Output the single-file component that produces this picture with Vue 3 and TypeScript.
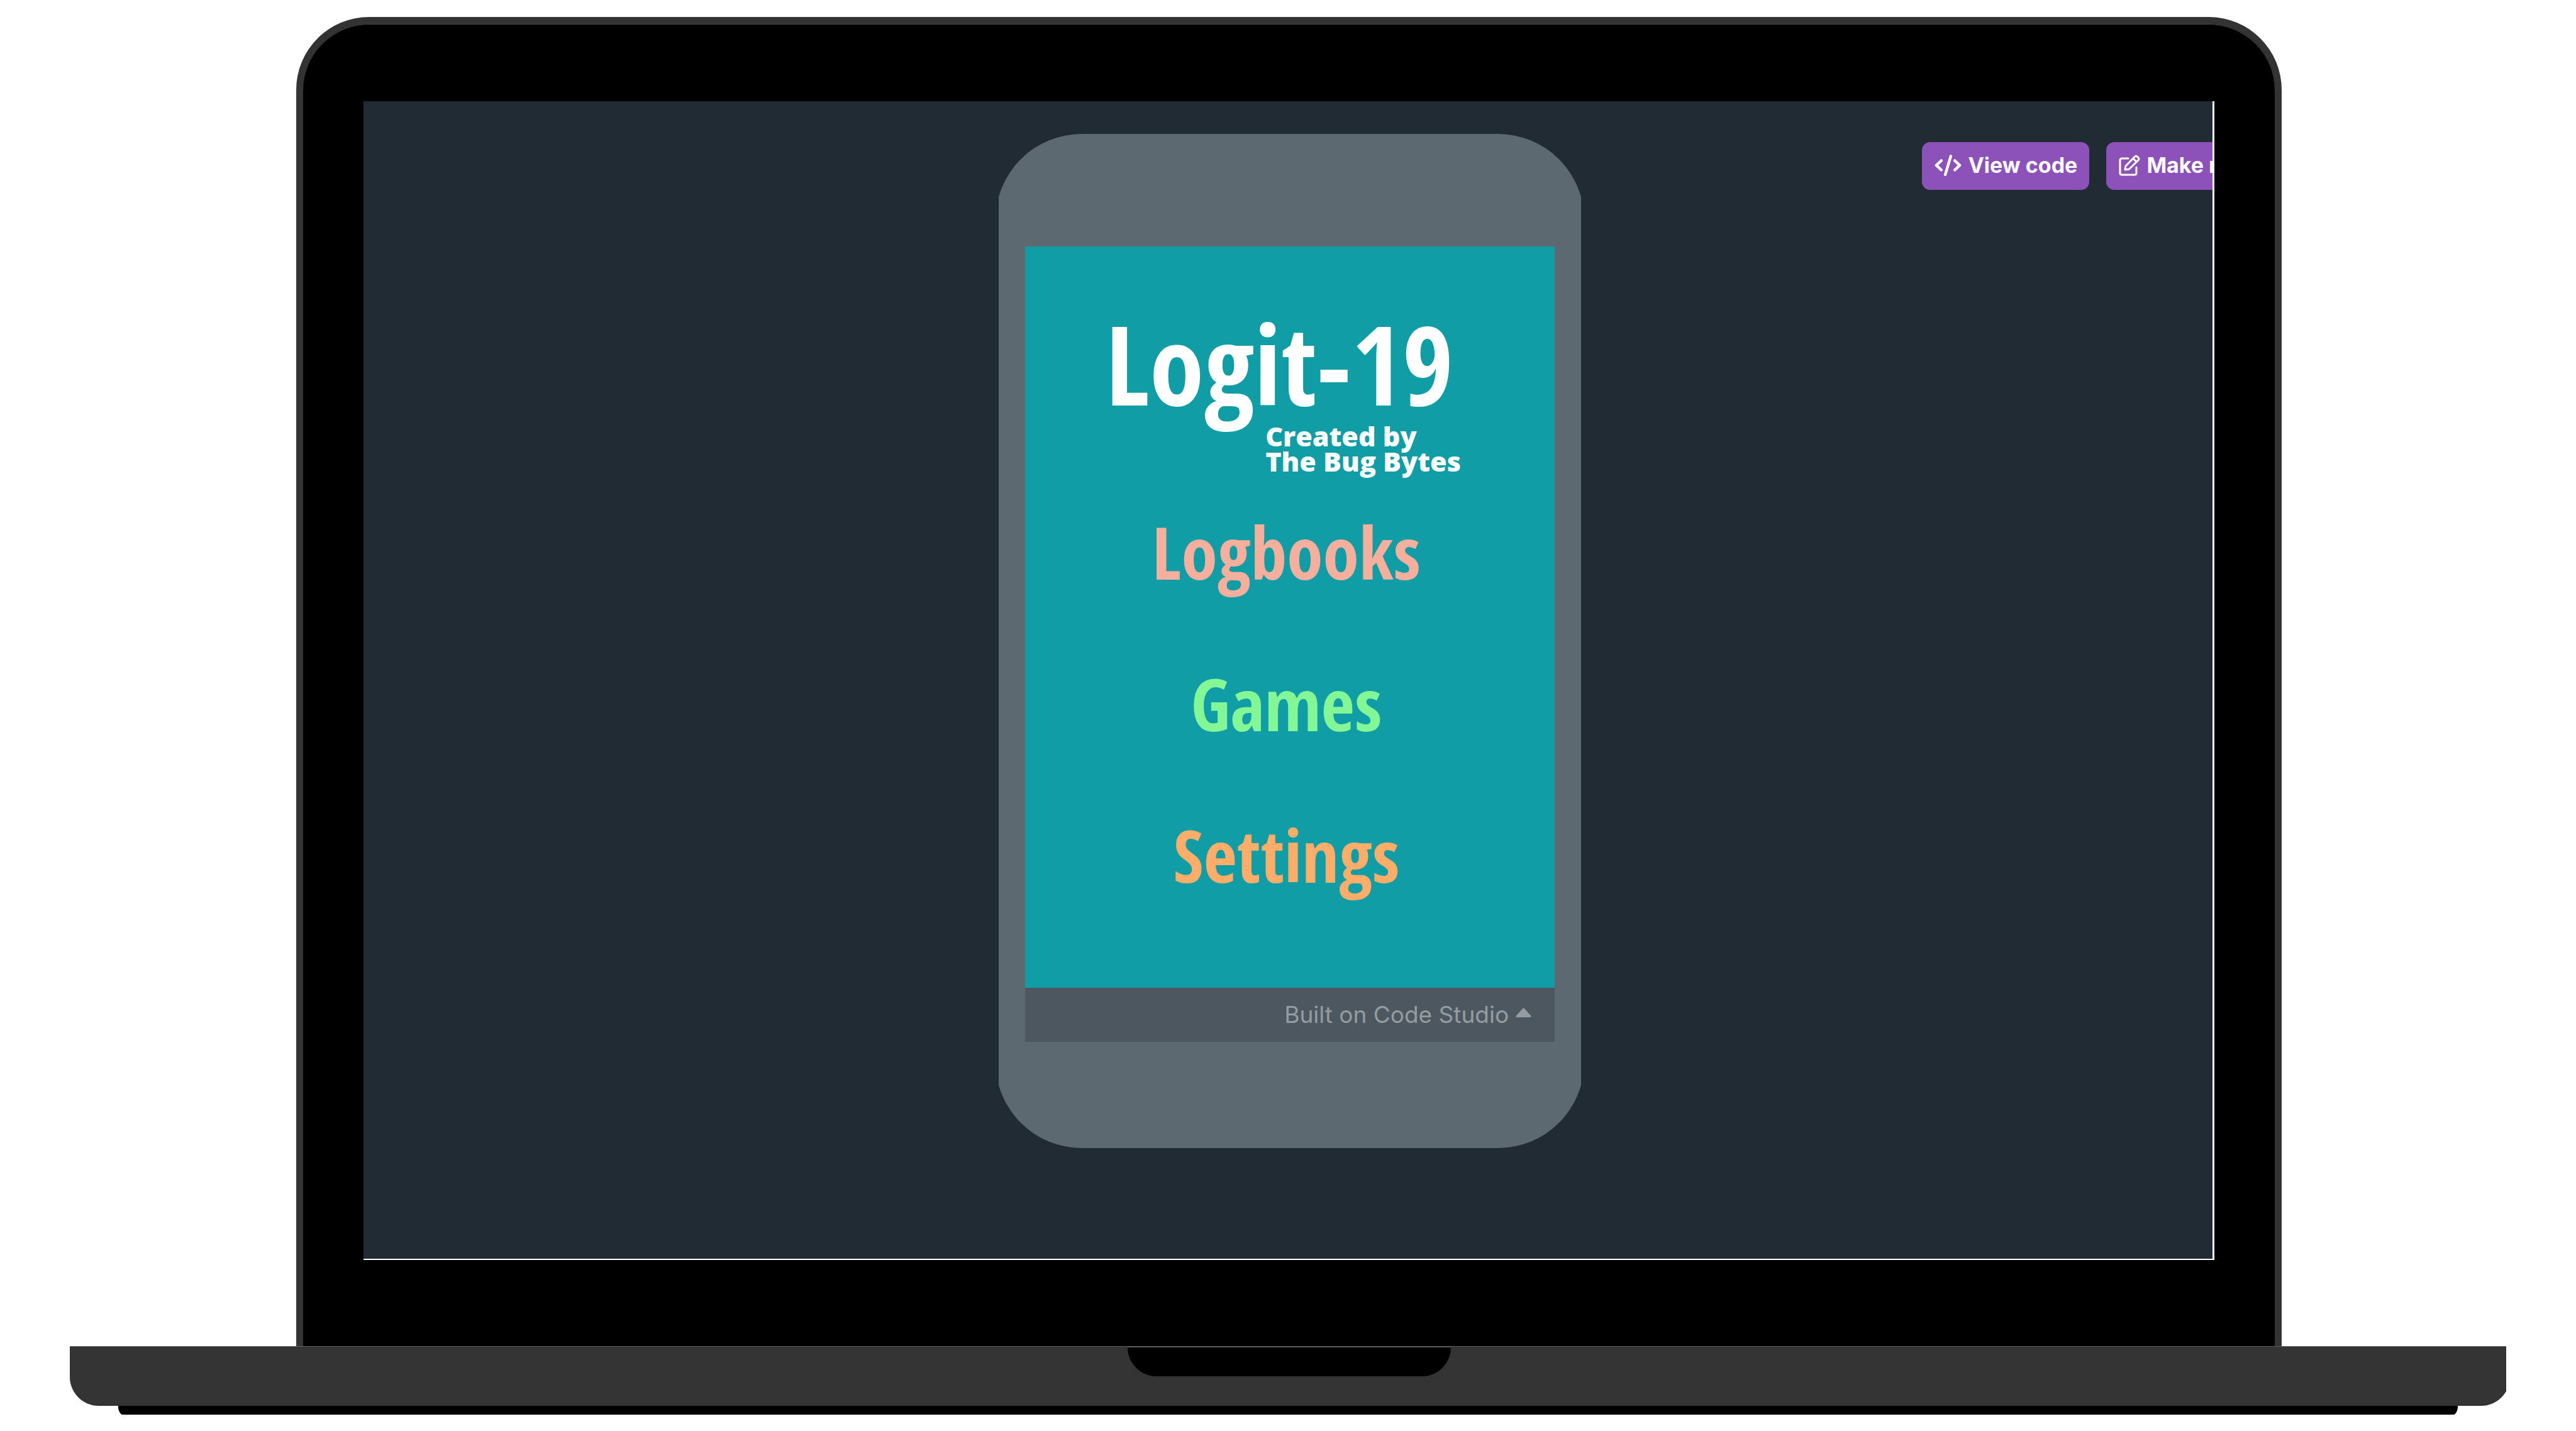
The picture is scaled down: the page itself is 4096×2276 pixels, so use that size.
<script setup lang="ts">
interface MenuItem {
  label: string
  tone: string
}

const menu: MenuItem[] = [
  { label: 'Logbooks', tone: 'salmon' },
  { label: 'Games', tone: 'green' },
  { label: 'Settings', tone: 'orange' },
]
</script>

<template>
  <div class="laptop">
    <div class="lid">
      <main class="screen">
        <div class="phone-clip">
          <section class="phone">
            <div class="app">
              <h1 class="title">Logit-19</h1>
              <p class="credit">Created by<br />The Bug Bytes</p>
              <nav class="menu">
                <button
                  v-for="item in menu"
                  :key="item.label"
                  type="button"
                  class="menu-item"
                  :class="item.tone"
                >
                  {{ item.label }}
                </button>
              </nav>
            </div>
            <footer class="footer">
              <a class="built" href="#">
                <span>Built on Code Studio</span>
                <svg class="caret" viewBox="0 0 25 15" aria-hidden="true">
                  <path d="M11 1.2Q12.5-.6 14 1.200L24.200 12.500Q25.400 15 23 15H2Q-.4 15 .8 12.500Z" />
                </svg>
              </a>
            </footer>
          </section>
        </div>
        <div class="toolbar">
          <button type="button" class="tool">
            <svg class="icon-code" viewBox="0 0 640 512" aria-hidden="true">
              <g fill="none" stroke="currentColor" stroke-width="66" stroke-linecap="round">
                <path d="M160 142L40 254L160 366" stroke-linejoin="round" />
                <path d="M480 142L600 254L480 366" stroke-linejoin="round" />
                <path d="M386 34L254 478" />
              </g>
            </svg>
            <span>View code</span>
          </button>
          <button type="button" class="tool">
            <svg class="icon-edit" viewBox="0 0 34 34" aria-hidden="true">
              <g fill="none" stroke="currentColor" stroke-width="3" stroke-linejoin="round" stroke-linecap="round">
                <path d="M15 6H5Q2 6 2 9V29Q2 32 5 32H25Q28 32 28 29V20" />
                <path d="M11 18L25.500 3.200Q27.500 1.200 29.500 3.200L31 4.700Q33 6.700 31 8.700L16.500 23L10 24Z" />
                <path d="M23 6L28 11.500" />
              </g>
            </svg>
            <span>Make my own app</span>
          </button>
        </div>
      </main>
    </div>
    <div class="base">
      <div class="deck"><div class="notch"></div></div>
    </div>
    <div class="foot"><div class="foot-pad"></div></div>
  </div>
</template>

<style>
body {
  margin: 0;
  background: #fff;
}
</style>

<style scoped>
.laptop {
  box-sizing: border-box;
  width: 100%;
  padding-top: 27px;
  overflow: hidden;
  font-family: Inter, "Open Sans", sans-serif;
}

.lid {
  box-sizing: border-box;
  width: 77.06%;
  margin-left: 11.51%;
  padding: 123px 96px 137px;
  border: 11px solid #333;
  border-bottom: 0;
  border-radius: 116px 116px 0 0;
  background: #000;
  box-shadow: inset 0 1px #4a4a4a;
}

.screen {
  display: flex;
  align-items: flex-start;
  padding: 52px 0 176px 34.3%;
  overflow: hidden;
  border-right: 3px solid #fff;
  border-bottom: 2px solid #fff;
  background: #212b34;
}

.phone-clip {
  flex: none;
  width: 48%;
  overflow: hidden;
}

.phone {
  margin: 0 -5px;
  padding: 179px 47px 169px;
  border-radius: 137px;
  background: #5c6970;
}

.app {
  padding: 100px 0 154px;
  background: #119da6;
}

.title {
  margin: 0;
  padding-left: 15.2%;
  color: #fff;
  font: bold 175px/170px "Open Sans Condensed", "Open Sans", sans-serif;
}

.credit {
  margin: 12px 0 65px;
  padding-left: 45.4%;
  color: #fff;
  font: 800 43px/40px "Open Sans", Inter, sans-serif;
}

.menu {
  display: flex;
  flex-direction: column;
  align-items: center;
  gap: 125px;
  padding-right: 11px;
}

.menu-item {
  padding: 0;
  border: 0;
  background: none;
  font: bold 116px/116px "Open Sans Condensed", "Open Sans", sans-serif;
  cursor: pointer;
}

.salmon {
  color: #f6ae9d;
}

.green {
  color: #83f696;
}

.orange {
  color: #ffad69;
}

.footer {
  display: flex;
  justify-content: flex-end;
  padding: 20px 37px;
  background: #4d575f;
}

.built {
  display: flex;
  align-items: center;
  gap: 11px;
  color: #949ca2;
  font-size: 37px;
  line-height: 46px;
  text-decoration: none;
}

.caret {
  width: 25px;
  height: 15px;
  margin-bottom: 8px;
  fill: #949ca2;
}

.toolbar {
  display: flex;
  flex: none;
  gap: 27px;
  margin-top: 13px;
  margin-left: 28.1%;
}

.tool {
  display: flex;
  flex: none;
  align-items: center;
  gap: 10px;
  padding: 17px 19px 19px 20px;
  border: 0;
  border-radius: 13px;
  background: #8c52ba;
  color: #fff;
  font: 700 34px/40px Inter, "Open Sans", sans-serif;
  white-space: nowrap;
  cursor: pointer;
}

.icon-code {
  width: 43px;
  height: 34px;
}

.icon-edit {
  width: 34px;
  height: 34px;
}

.base {
  width: 94.6%;
  margin: 0 auto;
  overflow: hidden;
}

.deck {
  box-sizing: border-box;
  width: calc(100% + 6px);
  height: 95px;
  border-top: 1px solid #606060;
  border-radius: 0 0 46px 46px;
  background: #333;
}

.notch {
  box-sizing: border-box;
  width: 13.26%;
  height: 47px;
  margin-left: 43.34%;
  border-top: 1px solid #606060;
  border-radius: 0 0 46px 46px;
  background: #000;
}

.foot {
  width: 90.8%;
  height: 14px;
  margin: 0 auto;
  overflow: hidden;
}

.foot-pad {
  height: 18px;
  border-radius: 0 0 16px 16px;
  background: #000;
}
</style>
